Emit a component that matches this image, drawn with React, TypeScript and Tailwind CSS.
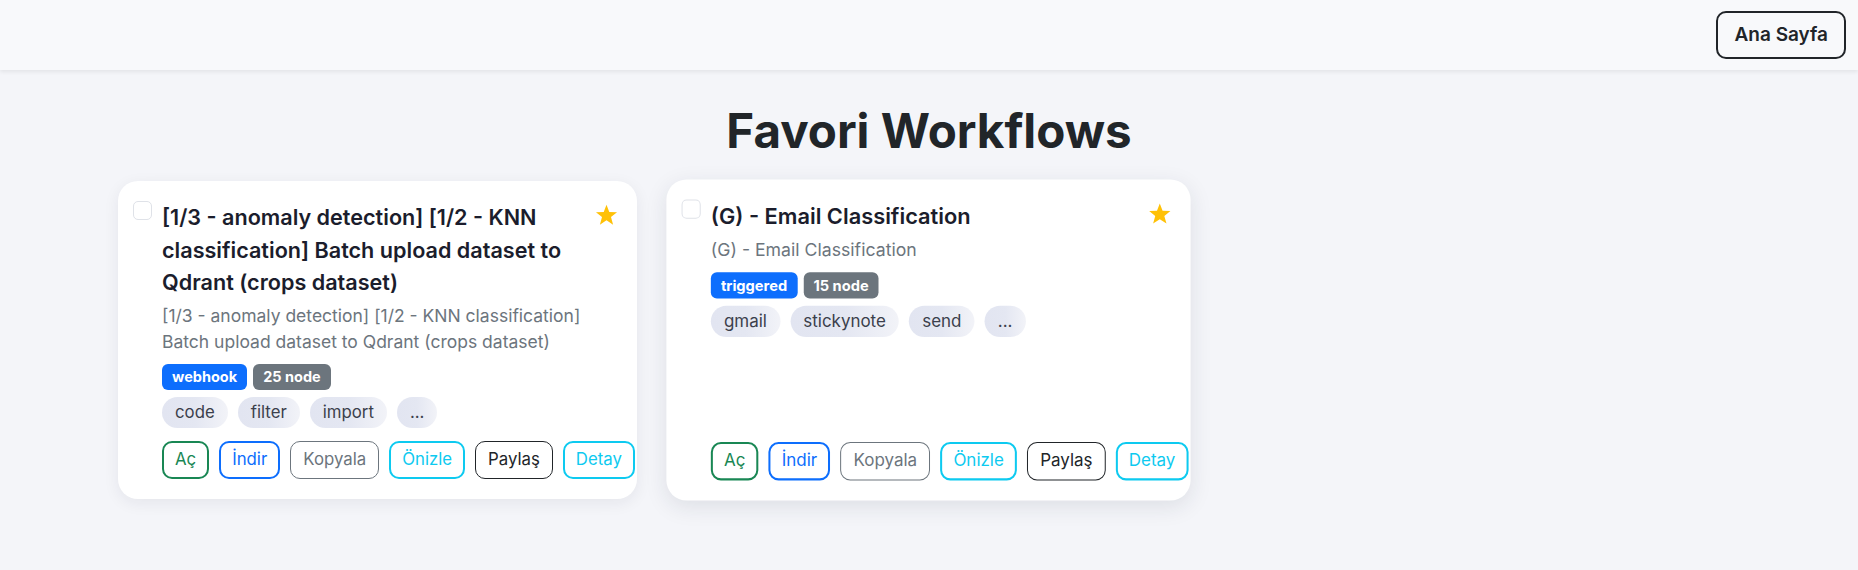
import React from "react";

type Wf = {
  title: string;
  desc: string;
  trigger: string;
  nodes: string;
  tags: string[];
  hovered?: boolean;
};

const items: Wf[] = [
  {
    title:
      "[1/3 - anomaly detection] [1/2 - KNN classification] Batch upload dataset to Qdrant (crops dataset)",
    desc: "[1/3 - anomaly detection] [1/2 - KNN classification] Batch upload dataset to Qdrant (crops dataset)",
    trigger: "webhook",
    nodes: "25 node",
    tags: ["code", "filter", "import", "..."],
  },
  {
    title: "(G) - Email Classification",
    desc: "(G) - Email Classification",
    trigger: "triggered",
    nodes: "15 node",
    tags: ["gmail", "stickynote", "send", "..."],
    hovered: true,
  },
];

function Star() {
  return (
    <svg width="23" height="22" viewBox="0 0 24 23" className="block">
      <polygon
        points="12,0.8 14.9,8.3 23,8.6 16.7,13.7 18.9,21.6 12,17.1 5.1,21.6 7.3,13.7 1,8.6 9.1,8.3"
        fill="#ffc107"
      />
    </svg>
  );
}

function Card({ wf }: { wf: Wf }) {
  return (
    <div
      className={
        wf.hovered
          ? "flex scale-[1.01] rounded-[20px] bg-white pb-5 pl-[15px] pr-[19px] pt-5 shadow-[0_6px_22px_rgba(30,35,60,0.10)]"
          : "flex rounded-[20px] bg-white pb-5 pl-[15px] pr-[19px] pt-5 shadow-[0_4px_16px_rgba(30,35,60,0.07)]"
      }
    >
      <div className="h-[19px] w-[19px] shrink-0 self-start rounded-[5px] border border-[#dfe2e8] bg-white" />
      <div className="ml-[10px] flex min-w-0 flex-1 flex-col">
        <div className="text-[21.6px] font-semibold leading-[32.5px] text-[#1b1d2c]">
          {wf.title}
        </div>
        <div className="mt-[4.5px] text-[17.5px] leading-[26px] text-[#6c757d]">
          {wf.desc}
        </div>
        <div className="mt-[9px] flex gap-[6px]">
          <span className="rounded-[6px] bg-[#0d6efd] px-[10px] text-[14.5px] font-bold leading-[26px] text-white">
            {wf.trigger}
          </span>
          <span className="rounded-[6px] bg-[#6c757d] px-[10px] text-[14.5px] font-bold leading-[26px] text-white">
            {wf.nodes}
          </span>
        </div>
        <div className="mt-[7px] flex gap-[10px]">
          {wf.tags.map((t) => (
            <span
              key={t}
              className="rounded-full bg-gradient-to-r from-[#e2e5f1] via-[#e4e7f2] to-[#f2f3f8] px-[13px] text-[16.8px] leading-[31px] text-[#3b3f4c]"
            >
              {t}
            </span>
          ))}
        </div>
        <div className="mt-auto flex gap-[10px] pt-[13px]">
          <button className="flex h-[38px] shrink-0 items-center rounded-[10px] border-2 border-[#198754] px-[11px] text-[16.8px] text-[#198754]">
            Aç
          </button>
          <button className="flex h-[38px] shrink-0 items-center rounded-[10px] border-2 border-[#0d6efd] px-[11px] text-[16.8px] text-[#0d6efd]">
            İndir
          </button>
          <button className="flex h-[38px] shrink-0 items-center rounded-[10px] border border-[#6c757d] px-[12px] text-[16.8px] text-[#6c757d]">
            Kopyala
          </button>
          <button className="flex h-[38px] shrink-0 items-center rounded-[10px] border-2 border-[#0dcaf0] px-[11px] text-[16.8px] text-[#0dcaf0]">
            Önizle
          </button>
          <button className="flex h-[38px] shrink-0 items-center rounded-[10px] border border-[#212529] px-[12px] text-[16.8px] text-[#212529]">
            Paylaş
          </button>
          <button className="flex h-[38px] shrink-0 items-center rounded-[10px] border-2 border-[#0dcaf0] px-[11px] text-[16.8px] text-[#0dcaf0]">
            Detay
          </button>
        </div>
      </div>
      <div className="ml-2 shrink-0 self-start pt-[3px]">
        <Star />
      </div>
    </div>
  );
}

export default function App() {
  return (
    <div
      className="min-h-screen bg-[#f4f5f9] text-[#212529]"
      style={{ fontFamily: "Inter, 'Noto Sans', sans-serif" }}
    >
      <header className="relative z-10 flex h-[70px] items-center justify-end bg-[#f8f9fb] pr-3 shadow-[0_2px_4px_rgba(0,0,0,0.07)]">
        <button className="flex h-[48px] items-center rounded-[10px] border-2 border-[#212529] px-[16px] text-[19px] font-semibold text-[#212529]">
          Ana Sayfa
        </button>
      </header>
      <main className="px-[118px] pt-[32px]">
        <h1 className="mb-[21px] text-center text-[47.5px] font-bold leading-[58px] text-[#212529]">
          Favori Workflows
        </h1>
        <div className="grid grid-cols-3 gap-8">
          {items.map((wf) => (
            <Card key={wf.title} wf={wf} />
          ))}
        </div>
      </main>
    </div>
  );
}
